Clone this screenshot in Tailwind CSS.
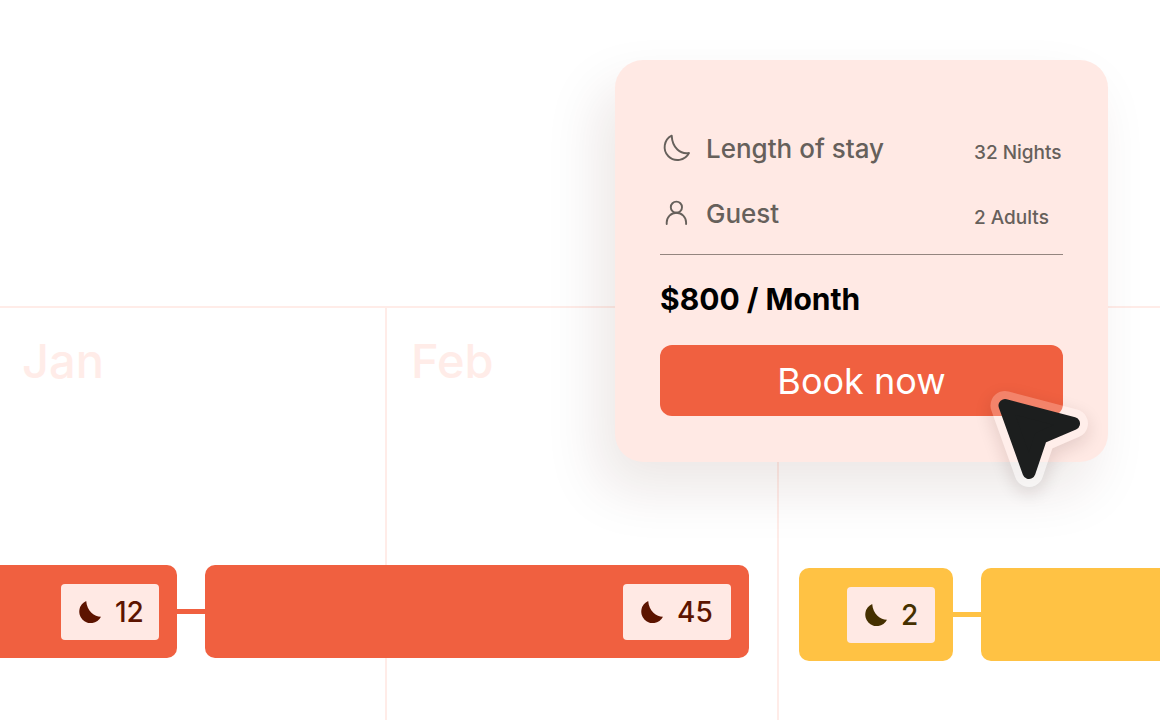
<!DOCTYPE html>
<html lang="en">
<head>
  <meta charset="UTF-8" />
  <meta name="viewport" content="width=device-width, initial-scale=1.0"/>
  <title>Booking calendar</title>
  <script src="https://cdn.jsdelivr.net/npm/@tailwindcss/browser@4"></script>
</head>
<body class="bg-white font-['Inter',sans-serif]">
  <svg class="hidden">
    <symbol id="moon" viewBox="0 0 22 22">
      <path d="M7.2 0A11.5 11.5 0 1 0 22 15.8C16 16 7.8 10.4 7.2 0Z" fill="currentColor"/>
    </symbol>
  </svg>

  <main class="relative min-h-screen flex flex-col pt-[306px] overflow-hidden">
    <!-- Calendar -->
    <section class="grid flex-1 border-t-2 border-[#ffece8]">
      <div class="[grid-area:1/1] grid grid-cols-[387px_392px_1fr] text-[47px] leading-12 font-medium text-[#ffece8]">
        <h2 class="border-r-2 border-[#ffece8] pl-[22px] pt-[29px]">Jan</h2>
        <h2 class="border-r-2 border-[#ffece8] pl-6 pt-[29px]">Feb</h2>
        <div></div>
      </div>

      <div class="[grid-area:1/1] flex items-start pt-[257px] pb-14">
        <div class="flex items-center flex-none">
          <div class="w-[177px] h-[93px] pr-[18px] rounded-r-[10px] bg-[#f06040] flex items-center justify-end">
            <div class="w-[98px] h-14 pl-[18px] rounded bg-[#ffe9e4] text-[#5c1400] flex items-center gap-[14px]">
              <svg class="size-[22px]"><use href="#moon"/></svg>
              <span class="text-[28px] leading-9 font-medium">12</span>
            </div>
          </div>
          <div class="w-7 h-[5px] bg-[#f06040]"></div>
          <div class="w-[544px] h-[93px] pr-[18px] rounded-[10px] bg-[#f06040] flex items-center justify-end">
            <div class="w-[108px] h-14 pl-[18px] rounded bg-[#ffe9e4] text-[#5c1400] flex items-center gap-[14px]">
              <svg class="size-[22px]"><use href="#moon"/></svg>
              <span class="text-[28px] leading-9 font-medium">45</span>
            </div>
          </div>
        </div>
        <div class="flex items-center flex-1 pl-[50px] pt-[3px]">
          <div class="w-[154px] h-[93px] pr-[18px] rounded-[10px] bg-[#ffc244] flex items-center justify-end">
            <div class="w-[88px] h-14 pl-[18px] rounded bg-[#ffe9e4] text-[#453000] flex items-center gap-[14px]">
              <svg class="size-[22px]"><use href="#moon"/></svg>
              <span class="text-[28px] leading-9 font-medium">2</span>
            </div>
          </div>
          <div class="w-7 h-[5px] bg-[#ffc244]"></div>
          <div class="flex-1 h-[93px] rounded-l-[10px] bg-[#ffc244]"></div>
        </div>
      </div>
    </section>

    <!-- Booking popover -->
    <aside class="absolute top-[60px] right-[52px] w-[493px] pt-[73px] px-[45px] pb-[46px] rounded-[28px] bg-[#ffe9e4] shadow-[-16px_28px_56px_rgba(70,20,10,0.1)]">
      <dl class="text-[#66605b]">
        <div class="flex items-center h-8">
          <svg class="size-8" viewBox="0 0 32 32" fill="none" stroke="currentColor" stroke-width="1.9" stroke-linejoin="round">
            <path d="M11.7 2.6A12.9 12.9 0 1 0 29 20C20.5 21.5 12.3 15 11.7 2.6Z"/>
          </svg>
          <dt class="flex-1 pl-[14px] text-[26px] leading-9 font-medium">Length of stay</dt>
          <dd class="w-[89px] pt-2 text-[19px] leading-7 font-medium whitespace-nowrap">32 Nights</dd>
        </div>
        <div class="flex items-center h-8 mt-[33px]">
          <svg class="size-8" viewBox="0 0 32 32" fill="none" stroke="currentColor" stroke-width="1.9" stroke-linecap="round">
            <circle cx="16.4" cy="9.2" r="5.6"/>
            <path d="M6.7 26v-1.5a9.7 9.7 0 0 1 19.4 0V26"/>
          </svg>
          <dt class="flex-1 pl-[14px] text-[26px] leading-9 font-medium">Guest</dt>
          <dd class="w-[89px] pt-2 text-[19px] leading-7 font-medium whitespace-nowrap">2 Adults</dd>
        </div>
      </dl>
      <hr class="mt-6 border-t border-[#94857f]">
      <p class="mt-6 text-[30px] leading-10 font-bold text-black">$800 / Month</p>
      <button type="button" class="mt-[26px] w-full h-[71px] rounded-[12px] bg-[#f06040] text-white text-[36px]">Book now</button>

      <!-- Cursor, its shadow falls only outside the halo -->
      <svg class="absolute right-[13px] -bottom-[33px] size-[110px] overflow-visible pointer-events-none" viewBox="0 0 110 110" stroke-linejoin="round">
        <defs>
          <path id="arrow" d="M20 20.5 88.5 38.5 55.7 52.6 44 87.5Z"/>
          <filter id="soft" x="-60%" y="-60%" width="220%" height="220%"><feGaussianBlur stdDeviation="9"/></filter>
          <mask id="outside" maskUnits="userSpaceOnUse" x="-50" y="-50" width="220" height="220">
            <rect x="-50" y="-50" width="220" height="220" fill="white"/>
            <use href="#arrow" fill="black" stroke="black" stroke-width="29"/>
          </mask>
          <mask id="halo" maskUnits="userSpaceOnUse" x="-50" y="-50" width="220" height="220">
            <use href="#arrow" fill="white" stroke="white" stroke-width="29"/>
          </mask>
        </defs>
        <g mask="url(#outside)">
          <use href="#arrow" y="6" fill="#301008" stroke="#301008" stroke-width="29" opacity=".13" filter="url(#soft)"/>
        </g>
        <rect width="110" height="110" fill="white" fill-opacity=".22" mask="url(#halo)"/>
        <use href="#arrow" fill="#1c1e1e" stroke="#1c1e1e" stroke-width="13"/>
      </svg>
    </aside>
  </main>
</body>
</html>
